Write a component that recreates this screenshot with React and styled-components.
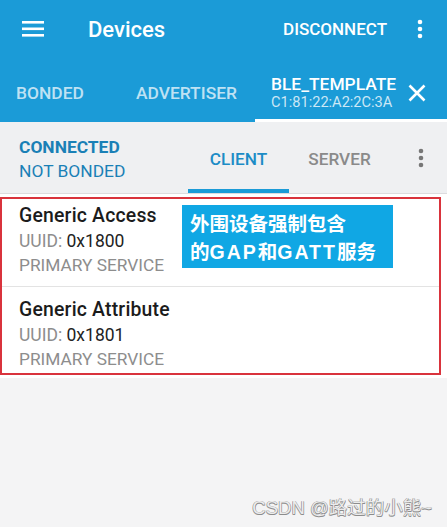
import React from "react";
import styled, { createGlobalStyle } from "styled-components";

const GlobalStyle = createGlobalStyle`
  html, body {
    margin: 0;
    padding: 0;
    background: #f4f4f5;
  }
  body {
    font-family: Roboto, "Noto Sans", "Liberation Sans", sans-serif;
  }
`;

const Screen = styled.div`
  position: relative;
  width: 447px;
  height: 527px;
  overflow: hidden;
  background: #f4f4f5;
`;

const AppBar = styled.header`
  background: #1b9bd7;
  color: #fff;
`;

const Toolbar = styled.div`
  display: flex;
  align-items: center;
  height: 58px;
  padding: 0 0 0 21px;
`;

const Title = styled.h1`
  flex: 1;
  margin: 0 0 0 43px;
  font-size: 22px;
  font-weight: 500;
`;

const ActionButton = styled.span`
  margin-right: 6px;
  font-size: 17px;
  font-weight: 500;
`;

const IconSlot = styled.span`
  display: flex;
  align-items: center;
  justify-content: center;
  width: ${(p) => p.$w || 48}px;
  margin-right: ${(p) => p.$mr || 0}px;
`;

const TabRow = styled.div`
  display: flex;
  height: 64px;
`;

const Tab = styled.div`
  display: flex;
  align-items: center;
  box-sizing: border-box;
  width: ${(p) => (p.$w ? `${p.$w}px` : "auto")};
  flex: ${(p) => (p.$w ? "none" : 1)};
  padding: 9px 0 0 16px;
  font-size: 17.4px;
  font-weight: 500;
  color: ${(p) => (p.$active ? "#fff" : "rgba(255,255,255,0.72)")};
  border-bottom: 3px solid ${(p) => (p.$active ? "#fff" : "transparent")};
`;

const DeviceLabel = styled.div`
  flex: 1;
  display: flex;
  flex-direction: column;
  line-height: 18px;
`;

const DeviceName = styled.span`
  font-size: 17.4px;
  font-weight: 500;
`;

const DeviceMac = styled.span`
  font-size: 14.6px;
  font-weight: 400;
  color: rgba(255, 255, 255, 0.78);
`;

const SubBar = styled.div`
  display: flex;
  align-items: stretch;
  height: 71px;
  background: #eff0f2;
  border-bottom: 1px solid #dcdcde;
`;

const Status = styled.div`
  width: 188px;
  display: flex;
  flex-direction: column;
  justify-content: center;
  padding: 3px 0 0 19px;
  box-sizing: border-box;
  font-size: 17.4px;
  line-height: 24px;
  color: #1a80b6;
`;

const StatusStrong = styled.span`
  font-weight: 700;
`;

const SubTab = styled.div`
  width: 101px;
  display: flex;
  align-items: center;
  justify-content: center;
  box-sizing: border-box;
  padding-top: 6px;
  font-size: 17.2px;
  font-weight: 500;
  color: ${(p) => (p.$active ? "#1c8cc6" : "#8a8a8a")};
  border-bottom: 4px solid ${(p) => (p.$active ? "#1b9bd7" : "transparent")};
`;

const SubMenu = styled.div`
  flex: 1;
  display: flex;
  align-items: center;
  justify-content: center;
  padding-left: 4px;
`;

const List = styled.section`
  background: #fff;
  padding: 3px 0 3px;
  position: relative;
`;

const Highlight = styled.div`
  position: relative;
  margin-right: 6px;
  border: 2px solid #d9333c;
`;

const Service = styled.div`
  height: ${(p) => p.$h}px;
  box-sizing: border-box;
  padding: ${(p) => p.$top}px 0 0 17px;
  border-top: ${(p) => (p.$divider ? "1px solid #e3e3e3" : "none")};
  line-height: 24.5px;
`;

const ServiceName = styled.div`
  font-size: 19.4px;
  font-weight: 500;
  color: #1b1b1b;
  letter-spacing: 0.2px;
`;

const Uuid = styled.div`
  font-size: 17.5px;
  color: #8d8d8d;
`;

const UuidValue = styled.span`
  color: #222;
`;

const ServiceType = styled.div`
  font-size: 17.3px;
  color: #8d8d8d;
`;

const Callout = styled.div`
  position: absolute;
  left: 180px;
  top: 6px;
  width: 211px;
  height: 63px;
  box-sizing: border-box;
  padding: 5px 0 0 8px;
  background: #10a7e4;
  color: #fff;
  font-family: "Liberation Sans", "Noto Sans CJK SC", sans-serif;
  font-size: 19.5px;
  font-weight: 700;
  line-height: 28px;
  white-space: nowrap;
`;

const CalloutLine = styled.div`
  height: 28px;
`;

const Latin = styled.span`
  letter-spacing: 2px;
`;

const Watermark = styled.div`
  position: absolute;
  right: 15px;
  bottom: 8px;
  font-family: "Liberation Sans", "Noto Sans CJK SC", sans-serif;
  font-size: 18.5px;
  color: #ececec;
  text-shadow: 0.5px 0.5px 0 #8c8c8c, -0.5px -0.5px 0 #8c8c8c,
    0.5px -0.5px 0 #a0a0a0, -0.5px 0.5px 0 #a0a0a0;
`;

const Hamburger = () => (
  <svg width="24" height="18" viewBox="0 0 24 18">
    <rect x="1" y="1" width="22" height="2.6" fill="#fff" />
    <rect x="1" y="7.5" width="22" height="2.6" fill="#fff" />
    <rect x="1" y="14" width="22" height="2.6" fill="#fff" />
  </svg>
);

const Dots = ({ color }) => (
  <svg width="6" height="20" viewBox="0 0 6 20">
    <circle cx="3" cy="3" r="2.3" fill={color} />
    <circle cx="3" cy="10" r="2.3" fill={color} />
    <circle cx="3" cy="17" r="2.3" fill={color} />
  </svg>
);

const Close = () => (
  <svg width="18" height="18" viewBox="0 0 18 18">
    <path d="M1.5 1.5 L16.5 16.5 M16.5 1.5 L1.5 16.5" stroke="#fff" strokeWidth="2.6" />
  </svg>
);

const services = [
  { name: "Generic Access", uuid: "0x1800", h: 87, top: 5 },
  { name: "Generic Attribute", uuid: "0x1801", h: 87, top: 11 },
];

export default function App() {
  return (
    <Screen>
      <GlobalStyle />
      <AppBar>
        <Toolbar>
          <Hamburger />
          <Title>Devices</Title>
          <ActionButton>DISCONNECT</ActionButton>
          <IconSlot $w={54}>
            <Dots color="#fff" />
          </IconSlot>
        </Toolbar>
        <TabRow>
          <Tab $w={120}>BONDED</Tab>
          <Tab $w={135}>ADVERTISER</Tab>
          <Tab $active>
            <DeviceLabel>
              <DeviceName>BLE_TEMPLATE</DeviceName>
              <DeviceMac>C1:81:22:A2:2C:3A</DeviceMac>
            </DeviceLabel>
            <IconSlot $w={36} $mr={12}>
              <Close />
            </IconSlot>
          </Tab>
        </TabRow>
      </AppBar>

      <SubBar>
        <Status>
          <StatusStrong>CONNECTED</StatusStrong>
          <span>NOT BONDED</span>
        </Status>
        <SubTab $active>CLIENT</SubTab>
        <SubTab>SERVER</SubTab>
        <SubMenu>
          <Dots color="#777" />
        </SubMenu>
      </SubBar>

      <List>
        <Highlight>
          {services.map((s, i) => (
            <Service key={s.uuid} $h={s.h} $top={s.top} $divider={i > 0}>
              <ServiceName>{s.name}</ServiceName>
              <Uuid>
                UUID: <UuidValue>{s.uuid}</UuidValue>
              </Uuid>
              <ServiceType>PRIMARY SERVICE</ServiceType>
            </Service>
          ))}
          <Callout>
            <CalloutLine>外围设备强制包含</CalloutLine>
            <CalloutLine>
              的<Latin>GAP</Latin>和<Latin>GATT</Latin>服务
            </CalloutLine>
          </Callout>
        </Highlight>
      </List>

      <Watermark>CSDN @路过的小熊~</Watermark>
    </Screen>
  );
}
